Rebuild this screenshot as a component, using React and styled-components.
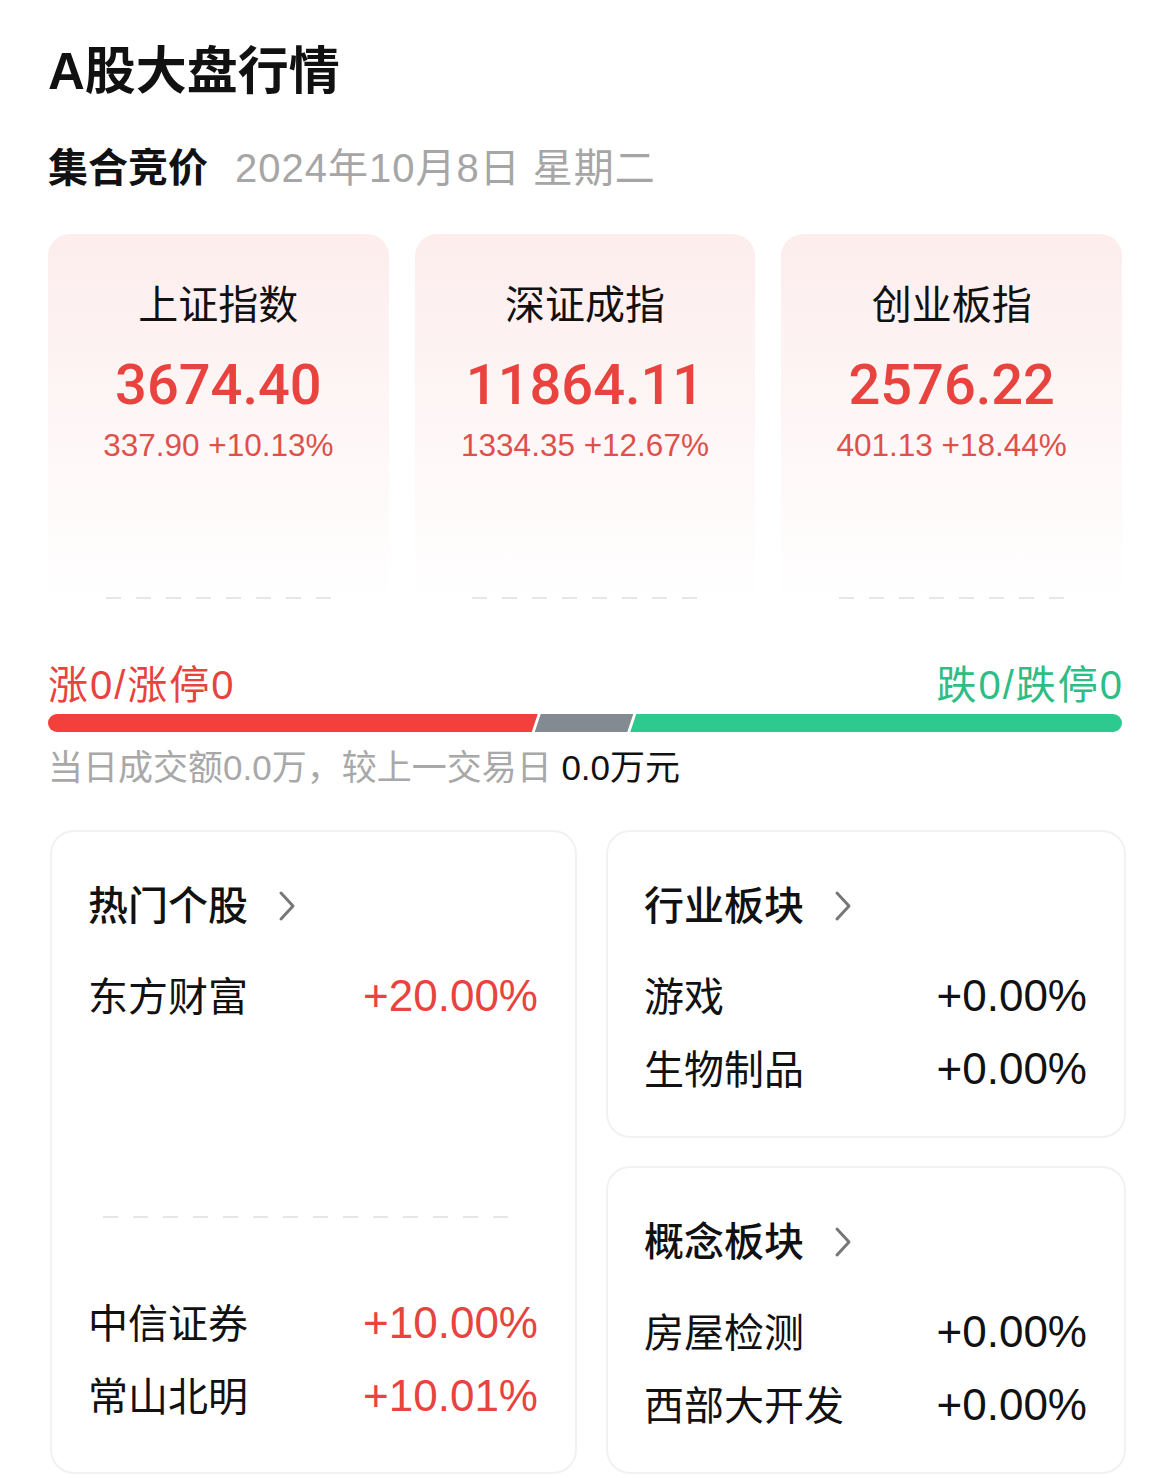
import styled, { createGlobalStyle } from "styled-components";

const GlobalStyle = createGlobalStyle`
  html, body {
    margin: 0;
    padding: 0;
    background: #ffffff;
  }
  body {
    font-family: "Liberation Sans", "Noto Sans CJK SC", sans-serif;
    color: #111111;
  }
  * {
    box-sizing: border-box;
  }
`;

const RED = "#e8433e";
const GREEN = "#2dbd85";

const indices = [
    { name: "上证指数", value: "3674.40", change: "337.90 +10.13%" },
    { name: "深证成指", value: "11864.11", change: "1334.35 +12.67%" },
    { name: "创业板指", value: "2576.22", change: "401.13 +18.44%" },
];

const hotTop = [{ name: "东方财富", pct: "+20.00%" }];
const hotRest = [
    { name: "中信证券", pct: "+10.00%" },
    { name: "常山北明", pct: "+10.01%" },
];
const industry = [
    { name: "游戏", pct: "+0.00%" },
    { name: "生物制品", pct: "+0.00%" },
];
const concept = [
    { name: "房屋检测", pct: "+0.00%" },
    { name: "西部大开发", pct: "+0.00%" },
];

const Page = styled.div`
    width: 1170px;
    padding: 42px 48px 0;
`;

const Title = styled.h1`
    margin: 0;
    font-size: 51px;
    line-height: 60px;
    font-weight: 600;
    color: #111;
`;

const SubRow = styled.div`
    margin-top: 42px;
    display: flex;
    align-items: baseline;
    font-size: 40px;
    line-height: 48px;
`;

const Session = styled.span`
    font-weight: 700;
    color: #111;
`;

const DateText = styled.span`
    margin-left: 27px;
    color: #a6a6a6;
    letter-spacing: 1px;
`;

const IndexGrid = styled.div`
    margin-top: 42px;
    display: grid;
    grid-template-columns: repeat(3, 1fr);
    column-gap: 26px;
`;

const IndexCard = styled.div`
    height: 372px;
    border-radius: 22px;
    background: linear-gradient(180deg, #fdeded 0%, #fef6f6 50%, #ffffff 100%);
    display: flex;
    flex-direction: column;
    align-items: center;
    padding-top: 47px;
`;

const IndexName = styled.div`
    font-size: 40px;
    line-height: 48px;
    color: #111;
`;

const IndexValue = styled.div`
    margin-top: 22px;
    font-family: Roboto, "Liberation Sans", sans-serif;
    font-weight: 500;
    font-size: 56px;
    line-height: 68px;
    color: ${RED};
`;

const IndexChange = styled.div`
    margin-top: 6px;
    font-size: 31.5px;
    line-height: 40px;
    color: #e0504b;
`;

const Dashes = styled.div`
    width: ${(p) => p.$width}px;
    height: 2px;
    margin-top: ${(p) => (p.$auto ? "auto" : "0")};
    margin-bottom: ${(p) => p.$bottom || 0}px;
    margin-left: ${(p) => p.$left || 0}px;
    background: repeating-linear-gradient(
        90deg,
        #e6e6e6 0 15px,
        transparent 15px 30px
    );
`;

const StatsRow = styled.div`
    margin-top: 55px;
    display: flex;
    justify-content: space-between;
    font-size: 40px;
    line-height: 48px;
`;

const StatText = styled.span`
    color: ${(p) => p.$color};
    letter-spacing: 2px;
    margin-right: ${(p) => (p.$end ? "-2px" : "0")};
`;

const Bar = styled.div`
    margin-top: 5px;
    height: 18px;
    display: flex;
`;

const clipFor = {
    first: "polygon(0 0, 100% 0, calc(100% - 6px) 100%, 0 100%)",
    middle: "polygon(6px 0, 100% 0, calc(100% - 6px) 100%, 0 100%)",
    last: "polygon(6px 0, 100% 0, 100% 100%, 0 100%)",
};

const Segment = styled.div`
    flex: ${(p) => p.$flex};
    background: ${(p) => p.$color};
    clip-path: ${(p) => clipFor[p.$pos]};
    margin-left: ${(p) => (p.$pos === "first" ? "0" : "-3px")};
    border-radius: ${(p) =>
        p.$pos === "first" ? "9px 0 0 9px" : p.$pos === "last" ? "0 9px 9px 0" : "0"};
`;

const Turnover = styled.div`
    margin-top: 15px;
    font-size: 35px;
    line-height: 42px;
    color: #a8a8a8;
`;

const TurnoverValue = styled.span`
    color: #111;
`;

const PanelGrid = styled.div`
    margin-top: 41px;
    margin-left: 2px;
    display: grid;
    grid-template-columns: 527px 520px;
    column-gap: 29px;
    row-gap: 28px;
`;

const Panel = styled.div`
    grid-row: ${(p) => (p.$tall ? "span 2" : "auto")};
    border: 2px solid #f1f1f1;
    border-radius: 24px;
    padding: 50px 37px 42px 36px;
    display: flex;
    flex-direction: column;
    background: #fff;
`;

const PanelHead = styled.div`
    display: flex;
    align-items: center;
    gap: 30px;
    font-size: 40px;
    line-height: 48px;
    font-weight: 500;
    color: #111;
`;

const List = styled.div`
    margin-top: ${(p) => p.$top}px;
    margin-bottom: ${(p) => p.$bottom || 0}px;
    display: flex;
    flex-direction: column;
    gap: 24px;
`;

const Row = styled.div`
    display: flex;
    justify-content: space-between;
    align-items: baseline;
    font-size: 40px;
    line-height: 48px;
    color: #111;
`;

const Pct = styled.span`
    font-size: 44px;
    color: ${(p) => p.$color};
`;

const Chevron = () => (
    <svg width="18" height="32" viewBox="0 0 18 32">
        <polyline
            points="3,3 15,16 3,29"
            fill="none"
            stroke="#777"
            strokeWidth="3"
            strokeLinecap="round"
            strokeLinejoin="round"
        />
    </svg>
);

const Rows = ({ items, color, top, bottom }) => (
    <List $top={top} $bottom={bottom}>
        {items.map((it) => (
            <Row key={it.name}>
                <span>{it.name}</span>
                <Pct $color={color}>{it.pct}</Pct>
            </Row>
        ))}
    </List>
);

const App = () => {
    return (
        <Page>
            <GlobalStyle />
            <Title>A股大盘行情</Title>
            <SubRow>
                <Session>集合竞价</Session>
                <DateText>2024年10月8日 星期二</DateText>
            </SubRow>

            <IndexGrid>
                {indices.map((idx) => (
                    <IndexCard key={idx.name}>
                        <IndexName>{idx.name}</IndexName>
                        <IndexValue>{idx.value}</IndexValue>
                        <IndexChange>{idx.change}</IndexChange>
                        <Dashes $width={225} $auto $bottom={7} />
                    </IndexCard>
                ))}
            </IndexGrid>

            <StatsRow>
                <StatText $color={RED}>涨0/涨停0</StatText>
                <StatText $color={GREEN} $end>
                    跌0/跌停0
                </StatText>
            </StatsRow>
            <Bar>
                <Segment $pos="first" $flex={487} $color="#f4403b" />
                <Segment $pos="middle" $flex={98} $color="#848a92" />
                <Segment $pos="last" $flex={489} $color="#2ec98f" />
            </Bar>
            <Turnover>
                当日成交额0.0万，较上一交易日 <TurnoverValue>0.0万元</TurnoverValue>
            </Turnover>

            <PanelGrid>
                <Panel $tall>
                    <PanelHead>
                        热门个股
                        <Chevron />
                    </PanelHead>
                    <Rows items={hotTop} color={RED} top={42} />
                    <Dashes $width={405} $auto $left={15} />
                    <Rows items={hotRest} color={RED} top={81} bottom={9} />
                </Panel>
                <Panel>
                    <PanelHead>
                        行业板块
                        <Chevron />
                    </PanelHead>
                    <Rows items={industry} color="#111" top={42} />
                </Panel>
                <Panel>
                    <PanelHead>
                        概念板块
                        <Chevron />
                    </PanelHead>
                    <Rows items={concept} color="#111" top={42} />
                </Panel>
            </PanelGrid>
        </Page>
    );
};

export default App;
